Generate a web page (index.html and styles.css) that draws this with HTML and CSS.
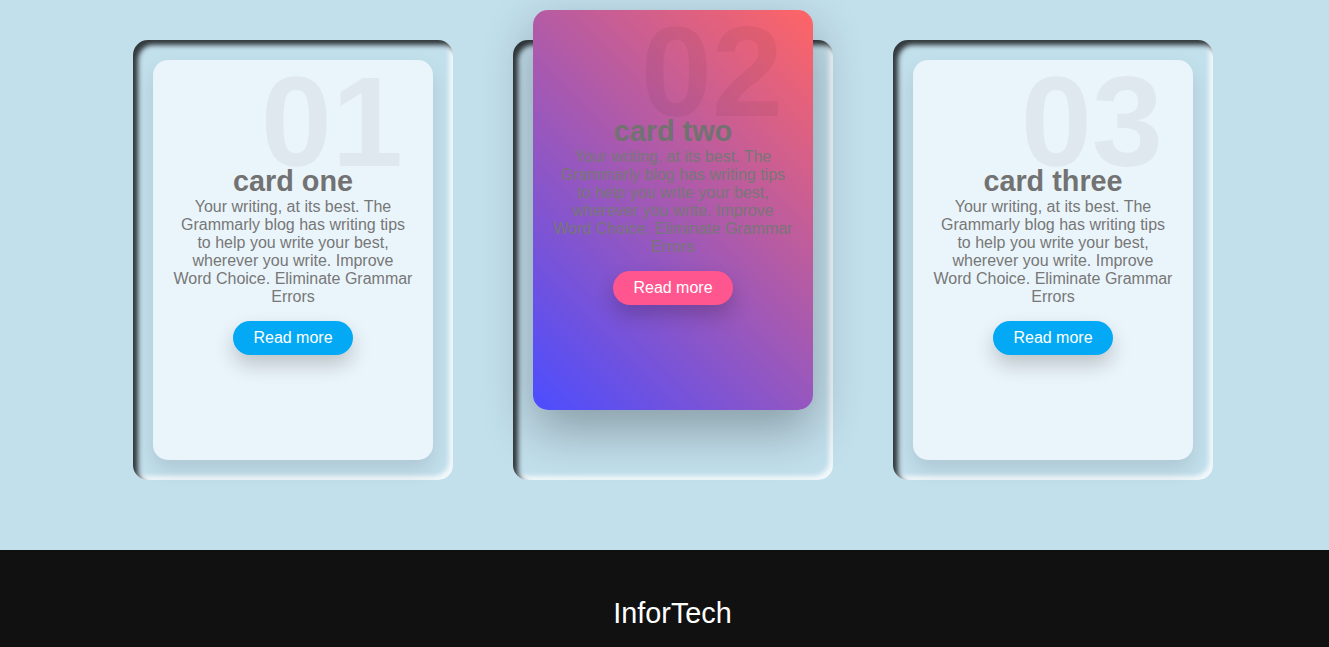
FILE: index.html
```html
<!DOCTYPE html>
<html lang="en">
<head>
<meta charset="utf-8">
<title>Cards</title>
<link rel="stylesheet" href="styles.css">
</head>
<body>
<section class="cards">
  <div class="card">
    <div class="box">
      <h2 class="num">01</h2>
      <div class="content">
        <h3 class="title">card one</h3>
        <p class="text">Your writing, at its best. The Grammarly blog has writing tips to help you write your best, wherever you write. Improve Word Choice. Eliminate Grammar Errors</p>
        <a class="btn" href="#">Read more</a>
      </div>
    </div>
  </div>
  <div class="card">
    <div class="box box-active">
      <h2 class="num">02</h2>
      <div class="content">
        <h3 class="title">card two</h3>
        <p class="text">Your writing, at its best. The Grammarly blog has writing tips to help you write your best, wherever you write. Improve Word Choice. Eliminate Grammar Errors</p>
        <a class="btn btn-pink" href="#">Read more</a>
      </div>
    </div>
  </div>
  <div class="card">
    <div class="box">
      <h2 class="num">03</h2>
      <div class="content">
        <h3 class="title">card three</h3>
        <p class="text">Your writing, at its best. The Grammarly blog has writing tips to help you write your best, wherever you write. Improve Word Choice. Eliminate Grammar Errors</p>
        <a class="btn" href="#">Read more</a>
      </div>
    </div>
  </div>
</section>
<footer class="footer">
  <h2 class="brand">InforTech</h2>
</footer>
</body>
</html>
```
FILE: styles.css
```css
* {
  box-sizing: border-box;
}

html, body {
  margin: 0;
  padding: 0;
}

body {
  background: #c2dfec;
  font-family: "Liberation Sans", Arial, sans-serif;
  overflow: hidden;
}

.cards {
  height: 550px;
  display: flex;
  justify-content: center;
  align-items: flex-start;
  gap: 60px;
  padding: 40px 0 0 17px;
}

.card {
  width: 320px;
  height: 440px;
  border-radius: 15px;
  padding: 20px;
  display: flex;
  box-shadow:
    inset 5px 5px 5px rgba(0, 0, 0, 0.75),
    inset -4px -4px 5px rgba(255, 255, 255, 0.8);
}

.box {
  position: relative;
  flex: 1;
  border-radius: 15px;
  background: #eaf5fb;
  box-shadow: 0 10px 20px rgba(0, 0, 0, 0.1);
  display: flex;
  align-items: center;
  justify-content: center;
}

.box-active {
  transform: translateY(-50px);
  background: linear-gradient(45deg, #4b4dff, #ff6565);
  box-shadow: 0 20px 50px rgba(0, 0, 0, 0.3);
}

.num {
  position: absolute;
  top: -12px;
  right: 30px;
  margin: 0;
  font-size: 8rem;
  font-weight: bold;
  color: rgba(0, 0, 0, 0.05);
}

.content {
  position: relative;
  padding: 20px;
  text-align: center;
  color: #777;
}

.title {
  margin: 0;
  font-size: 1.8em;
  line-height: 33px;
  color: #727272;
}

.text {
  margin: 0;
  font-size: 16px;
  line-height: 18px;
}

.btn {
  display: inline-block;
  margin-top: 15px;
  padding: 8px 20px;
  border-radius: 20px;
  background: #03a9f4;
  color: #fff;
  font-size: 16px;
  line-height: 18px;
  text-decoration: none;
  box-shadow: 0 10px 20px rgba(0, 0, 0, 0.2);
}

.btn-pink {
  background: #ff568f;
}

.footer {
  height: 97px;
  background: #111;
  padding: 47px 0 0 16px;
  text-align: center;
}

.brand {
  margin: 0;
  color: #fff;
  font-size: 28.8px;
  font-weight: normal;
}
```
